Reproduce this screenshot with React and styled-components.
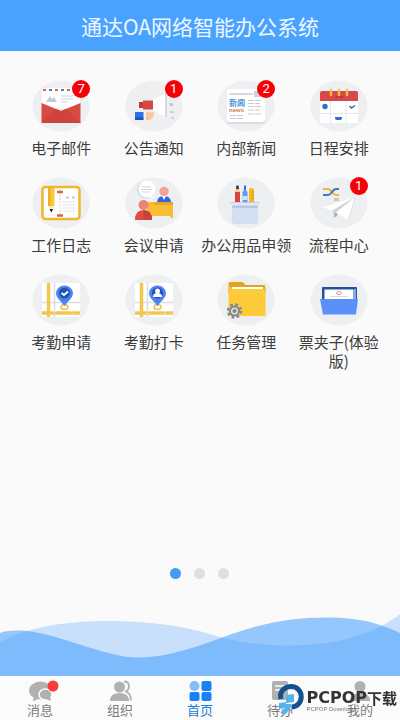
import React, { useState } from 'react'
import styled, { createGlobalStyle } from 'styled-components'

const GlobalStyle = createGlobalStyle`
  * {
    box-sizing: border-box;
  }
  body {
    margin: 0;
    background: #fafafa;
    font-family: 'Noto Sans CJK SC', sans-serif;
  }
  button {
    padding: 0;
    border: 0;
    background: none;
    font-family: inherit;
    cursor: pointer;
  }
`

const Page = styled.div`
  display: flex;
  flex-direction: column;
  min-height: 100vh;
`

const Header = styled.header`
  display: flex;
  align-items: center;
  justify-content: center;
  height: 51px;
  background: #4aa2ff;
`

const Title = styled.h1`
  margin: 0;
  font-size: 21px;
  font-weight: 400;
  line-height: 24px;
  color: #edf7ff;
`

const Main = styled.main`
  flex: 1;
  display: flex;
  flex-direction: column;
`

const AppGrid = styled.div`
  display: grid;
  grid-template-columns: repeat(4, 1fr);
  row-gap: 20px;
  padding: 29px 15px 0;
`

const Tile = styled.button`
  display: flex;
  flex-direction: column;
  align-items: center;
  gap: 6px;
`

const TileIcon = styled.span`
  position: relative;
  display: block;
  width: 58px;
  height: 52px;
  svg {
    display: block;
  }
`

const Badge = styled.span`
  position: absolute;
  top: 0;
  right: 0;
  width: 18px;
  height: 18px;
  border-radius: 50%;
  background: #f80008;
  color: #fff;
  font-family: Roboto, sans-serif;
  font-size: 13px;
  line-height: 18px;
  text-align: center;
`

const TileLabel = styled.span`
  font-size: 15px;
  line-height: 19px;
  color: #3c3c3c;
`

const Dots = styled.div`
  display: flex;
  justify-content: center;
  gap: 13px;
  margin-top: auto;
  padding: 0 1px 33px 0;
`

const Dot = styled.button`
  width: 11px;
  height: 11px;
  border-radius: 50%;
  background: ${({ $active }) => ($active ? '#429bf5' : '#dfdfdf')};
`

const Wave = styled.svg`
  display: block;
  width: 100%;
  height: 64px;
`

const TabBar = styled.nav`
  display: flex;
  height: 44px;
  padding-top: 4px;
  background: #fbfbfb;
`

const Tab = styled.a`
  flex: 1;
  display: flex;
  flex-direction: column;
  align-items: center;
  font-size: 13px;
  line-height: 16px;
  text-decoration: none;
  color: ${({ $active }) => ($active ? '#1a7fd4' : '#7c7c7c')};
  svg {
    display: block;
    overflow: visible;
  }
`

const Watermark = styled.div`
  position: fixed;
  right: 3px;
  bottom: 6px;
  display: flex;
  gap: 1px;
  pointer-events: none;
`

const Brand = styled.div`
  display: flex;
  flex-direction: column;
  padding-top: 5px;
`

const BrandName = styled.span`
  display: flex;
  align-items: center;
  font-family: 'DejaVu Sans', sans-serif;
  font-size: 16px;
  font-weight: 700;
  line-height: 17px;
  color: #333;
`

const BrandCjk = styled.span`
  font-family: 'Noto Sans CJK SC', sans-serif;
  font-size: 15px;
`

const BrandSub = styled.span`
  font-family: 'Liberation Sans', sans-serif;
  font-size: 6px;
  line-height: 6px;
  color: #777;
`

const Mail = () => (
  <>
    <path d="M10 8h38v20H10z" fill="#fff" />
    <path d="M11 10h3M23 10h3M35 10h3" stroke="#e0604f" strokeWidth="2" />
    <path d="M17 10h3M29 10h3" stroke="#4a7fc4" strokeWidth="2" />
    <path d="M14 22l4-6 2 3 2-2 3 5z" fill="#bdcbd8" />
    <path d="M29 16h12M29 19h12M29 22h7" stroke="#ccd2da" strokeWidth="1" />
    <path d="M9.500 23L29 31l19.500-8v20h-39z" fill="#d94a42" />
    <path d="M9.500 43L24 29l5 2 5-2 14.500 14z" fill="#cf433c" />
  </>
)

const Megaphone = () => (
  <>
    <path d="M28 20l14-7v25l-14-8z" fill="#fff" />
    <path d="M41 12v25" stroke="#c9ccd4" strokeWidth="1.500" />
    <path d="M18 20.500h10v9H18z" fill="#d94840" />
    <path d="M14 22h4v6h-4z" fill="#c23b35" />
    <path d="M10 32h8.500v6H10z" fill="#2f6fe4" />
    <path d="M10 37.500h8.500v2.500H10z" fill="#1e51b6" />
    <path d="M21 32l8 .5-1 5-3 2.500h-4z" fill="#f8c69d" />
    <path d="M44 24h4M45 25.500h3M45 32h4M46 38h3" stroke="#c3c8d2" strokeWidth="1.500" />
  </>
)

const News = () => (
  <>
    <rect x="10" y="10" width="38" height="34" rx="3" fill="#d9dde4" />
    <rect x="10" y="9" width="38" height="33" rx="3" fill="#fff" />
    <path d="M12.500 14H36" stroke="#b9bec6" strokeWidth="1.200" />
    <path d="M37 11h8v6h-8z" fill="#cdd2da" />
    <text x="12" y="26" fontSize="8" fontWeight="700" fill="#4a93d9">新闻</text>
    <text x="12" y="32" fontSize="6" fontWeight="700" fontFamily="Liberation Sans, sans-serif" fill="#cf7b4d">news</text>
    <path
      d="M31 20.500h14M31 23.500h12M31 26.500h14M31 30h12M31 34h14M13 35.500h14M13 38.500h14"
      stroke="#c6cad1"
      strokeDasharray="6 1"
    />
  </>
)

const Calendar = () => (
  <>
    <path d="M10 20h38v23H10z" fill="#fff" />
    <path d="M10 21v-8q0-2 2-2h34q2 0 2 2v8z" fill="#d8484a" />
    <path d="M25 17h8" stroke="#b5373b" strokeWidth="1.500" />
    <path d="M21 10v5M29 10v5M37 10v5" stroke="#f2bd45" strokeWidth="2.500" strokeLinecap="round" />
    <path d="M20.500 21v22M36 21v22M10 33.500h38" stroke="#e3e6eb" />
    <circle cx="15" cy="26.500" r="2.700" fill="#2f6bd0" />
    <path d="M39.500 26l2 2 3.500-2.500" fill="none" stroke="#3a6ba0" strokeWidth="1.500" />
    <path d="M25 37h7v1q0 2-2 2h-3q-2 0-2-2z" fill="#2f6bd0" />
  </>
)

const Journal = () => (
  <>
    <rect x="10.500" y="10" width="37" height="32" rx="3" fill="#fff" stroke="#efb72e" strokeWidth="2.500" />
    <path d="M16 11h6.500v18H16z" fill="#f9c63c" />
    <path d="M16 11h2.500v18H16z" fill="#eab02a" />
    <path d="M16 29h6.500l-3.200 6z" fill="#fbe6c4" />
    <path d="M17.500 32h3.600l-1.800 3.500z" fill="#222" />
    <path d="M28 12v28" stroke="#ccd0d6" strokeDasharray="2 1" />
    <path d="M25 15h6M25 38.500h6" stroke="#cf6f2d" strokeWidth="2.500" />
    <path d="M34 20.500h3M40 20.500h3" stroke="#c6cad0" strokeWidth="2" />
    <path d="M30 25h13M30 28h13M30 31h13M30 34h13" stroke="#dfe1e5" />
  </>
)

const Meeting = () => (
  <>
    <circle cx="21" cy="12.500" r="9" fill="#d5d9e1" />
    <path d="M23 3.500a9 9 0 0 1 3 15l4 3-9-2a8.500 8.500 0 0 1 2-16z" fill="#fff" />
    <circle cx="22" cy="12" r="8.500" fill="#fff" />
    <path d="M17 10h9M16 12.500h11M17 15h8" stroke="#d2d5da" />
    <circle cx="39" cy="14.500" r="4.700" fill="#f3a397" />
    <path d="M32 26q0-7 7-7t7 7z" fill="#2f68dc" />
    <path d="M37 19h4l-2 4z" fill="#fff" />
    <path d="M22 25h26v16h-2.500v-2H22z" fill="#f6bd35" />
    <path d="M29 25h19v3H29z" fill="#e7a925" />
    <circle cx="18.500" cy="28" r="5" fill="#e98278" />
    <path d="M10 43q0-10 8.500-10T27 43z" fill="#dd4e42" />
    <path d="M18.500 33q8.500 0 8.500 10h-8.500z" fill="#c9423a" />
  </>
)

const Supplies = () => (
  <>
    <path d="M18 15h5v12h-5z" fill="#d8443d" />
    <path d="M18 15l1.500-6h2l1.500 6z" fill="#f3c6a3" />
    <path d="M19 12l.5-3.500h2L22 12z" fill="#333" />
    <path d="M27 8.500h2v5h-2z" fill="#3a6fc9" />
    <path d="M25.500 15l1.500-2h2l1.500 2v12h-5z" fill="#5c9cf5" />
    <path d="M25.500 19h5v4h-5z" fill="#cfe1fb" />
    <path d="M32 13q0-2 2-2h1q2 0 2 2v14h-5z" fill="#f7b71f" />
    <path d="M35 15h2M35 18h2M35 21h2" stroke="#c98c12" />
    <path d="M15 28h26v16q0 3-3 3H18q-3 0-3-3z" fill="#d5dff4" />
    <path d="M15 28h26v3H15z" fill="#b9c6e2" />
    <path d="M13.500 25h29v3.500h-29z" fill="#e0e7f6" />
    <path d="M13.500 25.500h29" stroke="#c2cce2" />
  </>
)

const Flow = () => (
  <>
    <path d="M13 12h5q2 0 4 3t4 3h3" fill="none" stroke="#eeb83e" strokeWidth="2" />
    <path d="M13 18h5q2 0 4-3t4-3h3" fill="none" stroke="#4675ba" strokeWidth="2" />
    <path d="M24 21h5v3h-5z" fill="#ccc9b8" />
    <path d="M45 20L12.500 30.500l10 3z" fill="#fff" />
    <path d="M45 20L22.500 33.500 24 41z" fill="#cfd2d8" />
    <path d="M24 41l4-3.500-3-2z" fill="#a7abb2" />
    <path d="M45 20L26 35.500 38 43z" fill="#fff" />
    <path d="M45 20l-3 12-4 11" fill="none" stroke="#dfe1e6" />
  </>
)

const MapBase = ({ children }) => (
  <>
    <path d="M10 9h38v34H10z" fill="#fff" />
    <path d="M22.500 9v34M10 28.500h38" stroke="#dadde2" strokeWidth="1.500" />
    <path d="M16.500 9v34M10 39h38" stroke="#f4c64f" strokeWidth="3.500" />
    <path d="M22.500 37v4M40 37v4" stroke="#fff" strokeDasharray="1 1" />
    <ellipse cx="32.500" cy="33" rx="3.500" ry="2.500" fill="#fff" stroke="#efc158" strokeWidth="1.500" />
    <path d="M32.500 32C29 27 24 24 24 19a8.500 7.500 0 0 1 17 0c0 5-5 8-8.500 13z" fill="#4c84f3" />
    <circle cx="32.500" cy="19" r="5.500" fill="#1f54b5" />
    {children}
  </>
)

const MapCheck = () => (
  <MapBase>
    <path d="M29.500 19l2.500 2 4-3.500" fill="none" stroke="#fff" strokeWidth="2" />
  </MapBase>
)

const MapUser = () => (
  <MapBase>
    <circle cx="32.500" cy="17" r="2.500" fill="#fff" />
    <path d="M28 23q0-4 4.500-4t4.500 4z" fill="#fff" />
  </MapBase>
)

const Folder = () => (
  <>
    <path d="M11.500 10q0-2 2-2h12l3 3h18q2 0 2 2v6h-37z" fill="#dfa420" />
    <path d="M15 13h31v5H15z" fill="#fff" />
    <path d="M11.500 13h3v2h33q1 0 1 1v25q0 1-1 1h-35q-1 0-1-1z" fill="#fccb37" />
    <circle cx="17.500" cy="37" r="6.500" fill="none" stroke="#7f8795" strokeWidth="2.500" strokeDasharray="2.600 2.505" />
    <circle cx="17.500" cy="37" r="4.500" fill="#f3e3b0" stroke="#7f8795" strokeWidth="2" />
    <circle cx="17.500" cy="37" r="2" fill="#6488bd" />
  </>
)

const Wallet = () => (
  <>
    <rect x="12" y="13" width="35" height="20" rx="1" fill="#25529f" />
    <path d="M14.500 15.500h29V27h-29z" fill="#fff" />
    <path d="M44 15h2v10h-2z" fill="#7facf4" />
    <ellipse cx="29" cy="19" rx="2.500" ry="1.500" fill="none" stroke="#e79a95" />
    <path d="M20 22.500h18" stroke="#ead2cf" />
    <path d="M10 25h38l-2 15.500H13z" fill="#5b90fa" />
  </>
)

const apps = [
  { label: '电子邮件', icon: Mail, count: 7 },
  { label: '公告通知', icon: Megaphone, count: 1 },
  { label: '内部新闻', icon: News, count: 2 },
  { label: '日程安排', icon: Calendar },
  { label: '工作日志', icon: Journal },
  { label: '会议申请', icon: Meeting },
  { label: '办公用品申领', icon: Supplies },
  { label: '流程中心', icon: Flow, count: 1 },
  { label: '考勤申请', icon: MapCheck },
  { label: '考勤打卡', icon: MapUser },
  { label: '任务管理', icon: Folder },
  { label: '票夹子(体验版)', icon: Wallet },
]

const tabs = [
  {
    label: '消息',
    icon: (
      <>
        <ellipse cx="11.500" cy="10.500" rx="11.500" ry="9" fill="#b1b1b1" />
        <path d="M5 15l-1 6.500 7-3.500z" fill="#b1b1b1" />
        <ellipse cx="16.500" cy="14.500" rx="6.500" ry="5.500" fill="#b1b1b1" stroke="#fbfbfb" strokeWidth="1.500" />
        <path d="M17 19l5 2-1-5z" fill="#b1b1b1" />
        <circle cx="24" cy="6" r="5.500" fill="#f83b3b" />
      </>
    ),
  },
  {
    label: '组织',
    icon: (
      <>
        <circle cx="10.500" cy="7" r="5.500" fill="#b1b1b1" />
        <path d="M1 21q0-8 9.500-8t9.500 8z" fill="#b1b1b1" />
        <path d="M15 1.500q5 0 5 5 0 3-3 5 5 2 5 9" fill="none" stroke="#b1b1b1" strokeWidth="1.800" />
      </>
    ),
  },
  {
    label: '首页',
    icon: (
      <>
        <circle cx="5.500" cy="6" r="5" fill="#86bdf6" />
        <rect x="12.500" y="1" width="10" height="10" rx="2" fill="#1682f5" />
        <rect x=".5" y="12" width="10" height="9" rx="2" fill="#1682f5" />
        <rect x="12.500" y="12" width="10" height="9" rx="2" fill="#1682f5" />
      </>
    ),
  },
  {
    label: '待办',
    icon: (
      <>
        <rect x="3" y="1" width="16" height="19" rx="2" fill="#b1b1b1" />
        <path d="M6 6h10M6 10h7" stroke="#fbfbfb" strokeWidth="1.500" />
      </>
    ),
  },
  {
    label: '我的',
    icon: (
      <>
        <circle cx="11" cy="6.500" r="5.500" fill="#b1b1b1" />
        <path d="M1 21q0-8 10-8t10 8z" fill="#b1b1b1" />
      </>
    ),
  },
]

const App = () => {
  const [tab, setTab] = useState(2)
  const [page, setPage] = useState(0)

  return (
    <Page>
      <GlobalStyle />
      <Header>
        <Title>通达OA网络智能办公系统</Title>
      </Header>
      <Main>
        <AppGrid>
          {apps.map(({ label, icon: Icon, count }) => (
            <Tile key={label} type="button">
              <TileIcon>
                <svg width="58" height="52" viewBox="0 0 58 52">
                  <ellipse cx="29" cy="26" rx="28.500" ry="25.500" fill="#eeeff1" />
                  <Icon />
                </svg>
                {count && <Badge>{count}</Badge>}
              </TileIcon>
              <TileLabel>{label}</TileLabel>
            </Tile>
          ))}
        </AppGrid>
        <Dots>
          {[0, 1, 2].map(i => (
            <Dot key={i} type="button" $active={i === page} onClick={() => setPage(i)} />
          ))}
        </Dots>
        <Wave viewBox="0 0 400 64" preserveAspectRatio="none">
          <path
            d="M0 30C30 14 70 9 108 9c34 0 72 4 98 12 26 8 50 12.500 84 12.500 44 0 84-11 110-31.500V64H0z"
            fill="#429dff"
            fillOpacity="0.270"
          />
          <path
            d="M0 21C8 18 22 18 34 20c34 6 74 25.500 104 25.500 32 0 62-12 94-23.500 34-12 62-16.500 96-16.500 30 0 50 5 72 15.500V64H0z"
            fill="#429dff"
            fillOpacity="0.550"
          />
        </Wave>
      </Main>
      <TabBar>
        {tabs.map(({ label, icon }, i) => (
          <Tab key={label} href="#" $active={i === tab} onClick={() => setTab(i)}>
            <svg width="23" height="22" viewBox="0 0 23 22">
              {icon}
            </svg>
            {label}
          </Tab>
        ))}
      </TabBar>
      <Watermark>
        <svg width="28" height="30" viewBox="0 0 28 30">
          <path d="M4 15C2 7 8 2.500 14.500 2.500A9.500 10 0 1 1 14.500 23" fill="none" stroke="#12528f" strokeWidth="5" />
          <path d="M9 11l8-1v8l-8 1zM2 19l7-1v6l-7 1zM9 20h5v3l-5 7H5v-4l4-2z" fill="#54b4ee" />
        </svg>
        <Brand>
          <BrandName>
            PCPOP<BrandCjk>下载</BrandCjk>
          </BrandName>
          <BrandSub>PCPOP Download</BrandSub>
        </Brand>
      </Watermark>
    </Page>
  )
}

export default App
